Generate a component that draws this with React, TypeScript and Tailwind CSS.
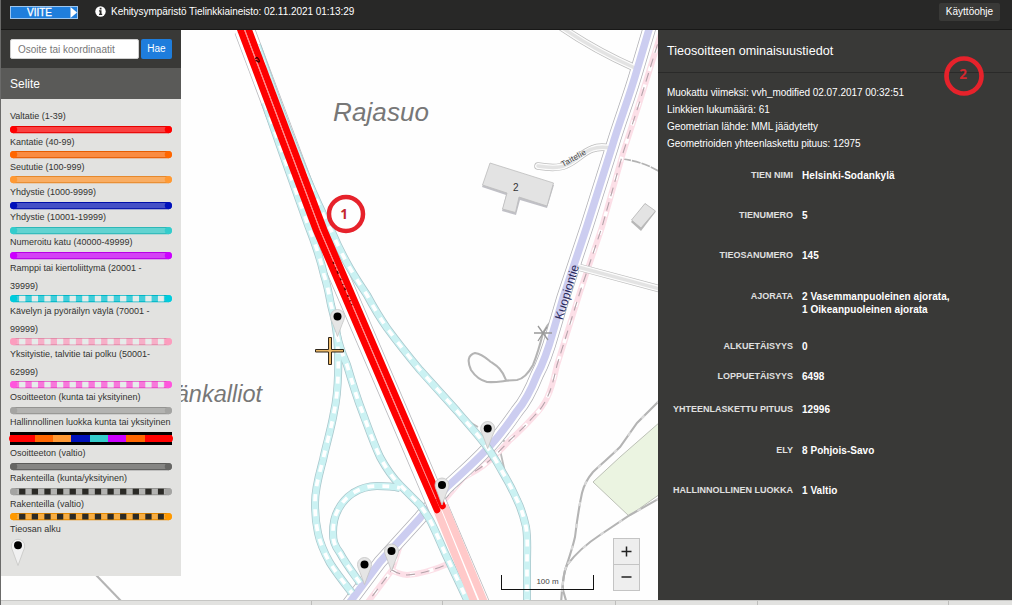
import React from "react";

const ramps = [
  "M257 45 C280 110 305 180 332 232 C345 262 355 277 367 295 C374 308 380 318 387 328 C398 343 410 358 420 370 L457 411 C468 424 480 437 487 447 C495 458 499 466 503 473 C509 483 513 491 517 500 C522 510 524 518 526 527 C528 540 527 550 527 562 L527 604",
  "M265 103 L281 149 L308 225 C315 243 320 257 324 275 C328 287 329 295 331 305 C334 315 336 325 337 335 C339 355 339 390 334 412 C331 430 326 445 323 460 C319 475 315 488 315 503 C315 515 316 524 318 533 C320 543 325 554 330 563 C337 574 345 584 352 593",
  "M337 335 C340 350 344 357 347 365 C352 382 357 398 362 411 C368 427 373 442 380 457 C386 468 392 477 400 485 C408 493 413 498 420 505 C424 511 428 516 431 522 C436 532 440 542 445 553 L470 606",
  "M360 583 C353 573 346 564 340 553 C334 545 333 540 333 533 C333 525 334 517 338 510 C342 502 347 497 353 493 C361 488 369 486 377 486 C385 486 391 486 400 488",
];
const highway = "M653 16 L637 70 C629 98 620 120 612 147 L587 226 L563 298 L553 332 C548 350 544 362 537 375 C531 390 525 402 517 411 C508 424 498 438 487 449 C474 463 460 475 447 487 C437 499 428 508 420 518 L380 562 L347 606";
const footpaths = [
  "M662 30 L638 107 L623 153 L602 227 L580 292 L557 365 C554 379 551 390 547 398 C543 406 540 410 535 415 C526 425 518 433 510 440 C498 453 488 463 477 470 L463 478 L440 505 L418 523 L400 545 L392 570 L368 602",
  "M392 570 Q398 574 407 575 Q425 574 450 563",
];
const lanes = [
  "M554 22 Q590 48 635 68",
  "M538 166 C550 168 560 168 566 165 C576 161 583 152 592 149 C599 146 605 147 611 148",
  "M578 267 C600 273 630 281 660 289",
];
const tracks = [
  "M554 318 Q547 325 543 333 C540 345 537 355 533 365 C528 374 523 379 517 380 C505 380 498 383 487 382 C479 380 475 376 471 370 C467 361 468 355 475 353 C482 354 486 358 491 362 C497 366 502 369 506 380",
  "M660 400 L637 423 L620 447 C610 457 601 464 593 472 C587 479 584 485 582 493 C579 507 577 520 575 537 C572 550 568 561 565 570 Q562 585 561 604",
  "M660 498 L630 515 L600 535 Q580 548 567 565 Q562 578 563 590 L567 604",
  "M96 575 L121 601",
];
const motorway = "M244.500 30 L319.500 230 L399 415 L482 610";

function Pin({ x, y }: { x: number; y: number }) {
  return (
    <g transform={`translate(${x} ${y})`}>
      <path d="M-7 0 A7 7 0 0 1 7 0 C7 3 5.500 5 4.500 8 L0 20 L-4.500 8 C-5.500 5 -7 3 -7 0Z" fill="#e5e5e5" stroke="#c4c4c4" strokeWidth=".8" />
      <circle r="4" fill="#000" />
    </g>
  );
}

function RoadMap() {
  return (
    <svg className="block h-[570px] w-[658px] bg-[#fefefe]" viewBox="0 30 658 570" fill="none">
      <path d="M660 422 L620 457 L593 482 L629 516 L660 494Z" fill="#ebf4e1" stroke="#bcc0b6" />
      {tracks.map((d) => <path key={d} d={d} stroke="#b4b4b4" strokeWidth="2.100" />)}
      {tracks.slice(1, 3).map((d) => <path key={d} d={d} stroke="#d9d9d9" strokeWidth="2.100" strokeDasharray="4 18" />)}
      <path d="M458 410 Q468 422 478 427 M495 432 L507 444 M500 450 L505 472 L516 495" stroke="#bbb" strokeWidth="1.800" />
      <path d="M622 159 Q642 161 660 172" stroke="#b3b3b3" strokeWidth="1.700" strokeDasharray="9 1" />
      {footpaths.map((d) => (
        <g key={d}>
          <path d={d} stroke="#fcdfe7" strokeWidth="6" />
          <path d={d} stroke="#fff" strokeWidth="3.500" strokeDasharray="5 14" />
          <path d={d} stroke="#b5a3aa" strokeWidth="1.100" strokeDasharray="9 6" />
        </g>
      ))}
      {lanes.map((d) => <path key={d} d={d} stroke="#bdbdbd" strokeWidth="7.500" strokeLinecap="round" />)}
      <path d={highway} stroke="#b0b0b5" strokeWidth="13.500" />
      <path d={highway} stroke="#fff" strokeWidth="12" />
      {lanes.map((d) => (
        <g key={d} strokeLinecap="round">
          <path d={d} stroke="#fcfcfc" strokeWidth="6" />
          <path d={d} stroke="#e3e3e3" strokeWidth="3.500" />
        </g>
      ))}
      <path d={highway} stroke="#cccdf0" strokeWidth="7.500" />
      <path d={motorway} stroke="#b9b9bd" strokeWidth="21" />
      <path d={motorway} stroke="#fff" strokeWidth="19.500" />
      {ramps.map((d) => <path key={d} d={d} stroke="#a9c6cb" strokeWidth="8" />)}
      {ramps.map((d) => <path key={d} d={d} stroke="#cbf2f3" strokeWidth="6.500" />)}
      {ramps.map((d) => <path key={d} d={d} stroke="#fff" strokeWidth="3.700" strokeDasharray="7 8" />)}
      <path d="M437 510 L475 604 M444 505 L485 604" stroke="#ffc9c9" strokeWidth="7.500" />
      <path d="M244.500 30 L320 230 L399.500 415 L440 508" stroke="#ffb0b0" strokeWidth="3" />
      <path d="M237.500 22 L316 230 L395.500 415 L437 510" stroke="#fd0000" strokeWidth="6.600" strokeLinecap="round" />
      <path d="M245.800 22 L324.200 230 L403.800 415 L442.500 506" stroke="#fd0000" strokeWidth="6.600" strokeLinecap="round" />
      <path d="M240.900 20 L320.100 230 L399.600 415 L436 499" stroke="#ff8585" strokeWidth="1" />
      <path d="M255.500 59 q1 -3 3 0 q2 3 0 3 l-3 -2" stroke="#440000" strokeWidth="1.300" />
      <path d="M333 262 L352 305" stroke="#6d0000" strokeWidth="1.500" strokeDasharray="2 4 1 3 3 5" />

      <path d="M490 165 L554 185 L547 208 L520 200 L516 215 L502 211 L506 195 L482 187Z" fill="#c0c0c6" />
      <path d="M490 163 L553.500 183 L547 206 L519 197 L515.500 212.500 L502.500 209 L507 193 L482.500 185Z" fill="#e3e3e3" stroke="#bdbdbd" strokeWidth=".8" />
      <path d="M631 222 L645 203.500 L655.500 212 L641 231Z" fill="#b8b8b8" />
      <path d="M631.500 220 L645 203.500 L655.500 211 L641 228Z" fill="#e3e3e3" stroke="#b5b5b5" strokeWidth=".8" />
      <path d="M534 333 H552 M538 326 L548 340 M547 327 L538 341" stroke="#999" strokeWidth="1.300" />

      <g className="font-['Liberation_Sans',sans-serif]">
        <text x="333" y="120.500" fontSize="26" fontStyle="italic" fill="#777" textLength="96">Rajasuo</text>
        <text x="262" y="402" fontSize="23.500" fontStyle="italic" fill="#777" textAnchor="end">änkalliot</text>
        <text transform="translate(562.500 320.500) rotate(-73)" fontSize="12" fill="#28285a" textLength="57">Kuopiontie</text>
        <text transform="translate(563 167) rotate(-29)" fontSize="8" fill="#444" textLength="27">Taitelie</text>
        <text x="513" y="191" fontSize="10" fill="#333">2</text>
      </g>

      <Pin x={337.5} y={316.5} />
      <Pin x={487.7} y={428.5} />
      <Pin x={442} y={485} />
      <Pin x={391.5} y={551} />
      <Pin x={364.5} y={564.5} />
      <path d="M328.500 337.500 h3 v12 h12 v2.500 h-12 v12.500 h-3 v-12.500 h-13 v-2.500 h13Z" fill="#edb967" stroke="#30271b" />
      <circle cx="346" cy="214" r="17" stroke="#e6222b" strokeWidth="4.500" />
      <text x="344" y="219" fontSize="13.500" fontWeight="700" fill="#c3262d" textAnchor="middle" className="font-['Open_Sans',sans-serif]">1</text>
    </svg>
  );
}

type Item = { label: string; color: string; inner?: string; kind?: "dash" | "black" | "multi" };

const legend: Item[] = [
  { label: "Valtatie (1-39)", color: "#ff0000", inner: "#fa4141" },
  { label: "Kantatie (40-99)", color: "#ff6600", inner: "#fa8b41" },
  { label: "Seututie (100-999)", color: "#ff9933", inner: "#f9ad63" },
  { label: "Yhdystie (1000-9999)", color: "#0011bb", inner: "#4450c6" },
  { label: "Yhdystie (10001-19999)", color: "#33cccc", inner: "#62d3d1" },
  { label: "Numeroitu katu (40000-49999)", color: "#cc00ff", inner: "#d442f5" },
  { label: "Ramppi tai kiertoliittymä (20001 - 39999)", color: "#00ccdd", inner: "#43cedb", kind: "dash" },
  { label: "Kävelyn ja pyöräilyn väylä (70001 - 99999)", color: "#fc9dbe", inner: "#f7afc8", kind: "dash" },
  { label: "Yksityistie, talvitie tai polku (50001-62999)", color: "#ff55dd", inner: "#f878db", kind: "dash" },
  { label: "Osoitteeton (kunta tai yksityinen)", color: "#a4a4a2", inner: "#b3b3b1" },
  { label: "Hallinnollinen luokka kunta tai yksityinen", color: "#ff0000", kind: "multi" },
  { label: "Osoitteeton (valtio)", color: "#666664", inner: "#858583" },
  { label: "Rakenteilla (kunta/yksityinen)", color: "#a4a4a2", inner: "#b3b3b1", kind: "black" },
  { label: "Rakenteilla (valtio)", color: "#ff9900", inner: "#f6ad43", kind: "black" },
];

const segments = [
  [0, 25, "#ff0000"], [25, 18, "#ff6600"], [43, 18, "#ff9933"], [61, 19, "#0011bb"], [80, 18, "#33cccc"],
  [98, 18, "#cc00ff"], [116, 19, "#ff6600"], [135, 27, "#ff0000"],
] as const;

function Bar({ item }: { item: Item }) {
  if (item.kind === "multi") {
    return (
      <svg className="-mb-[0.6px] mt-[0.6px] block h-[13px] w-[162px] overflow-visible" viewBox="0 0 162 13">
        <rect width="162" height="13" fill="#000" />
        {segments.map(([x, w, c]) => <rect key={x} x={x} y="3" width={w} height="7" fill={c} />)}
        <circle cx="2.500" cy="6.500" r="3.500" fill="#ff0000" />
        <circle cx="159.500" cy="6.500" r="3.500" fill="#ff0000" />
      </svg>
    );
  }
  return (
    <svg className="-mb-[0.6px] mt-[0.6px] block h-[7.2px] w-[162px] overflow-visible" viewBox="0 0 162 7.2">
      <rect width="162" height="7.200" rx="3.500" fill={item.color} />
      <rect width="155" x="3.500" height="7.200" fill="#000" opacity=".1" />
      <rect x="5" y="1" width="152" height="5.200" fill={item.inner} />
      {item.kind && (
        <path
          d="M9 3.600 H154"
          stroke={item.kind === "dash" ? "#e6ecea" : "#2b2a26"}
          strokeWidth="5.600"
          strokeDasharray="6.300 6.340"
        />
      )}
      <circle cx="3.500" cy="3.600" r="3.600" fill={item.color} />
      <circle cx="158.500" cy="3.600" r="3.600" fill={item.color} />
    </svg>
  );
}

function Sidebar() {
  return (
    <aside className="absolute left-0 top-0 flex h-[546px] w-[181px] flex-col bg-[#e2e2e0]">
      <div className="flex h-[38px] items-start gap-[2px] bg-[#393937] pl-[10px] pt-[9px]">
        <div className="flex h-[20px] w-[129px] items-center rounded-[2px] border border-[#cfcfcf] bg-white pl-[7px] text-[10px] text-[#777]">Osoite tai koordinaatit</div>
        <button className="h-[20px] w-[31px] rounded-[2px] bg-[#1e7ddc] text-[10px] leading-[20px] text-white">Hae</button>
      </div>
      <div className="h-[31px] bg-[#5a5a58] pl-[10px] text-[12px] leading-[32px] text-white">Selite</div>
      <div className="flex flex-col pl-[10px] pt-[8.4px] text-[9px] leading-[18px] text-[#333331]">
        {legend.map((item) => (
          <div key={item.label}>
            <div className="w-[162px]">{item.label}</div>
            <Bar item={item} />
          </div>
        ))}
        <div>Tieosan alku</div>
        <svg className="block h-[28px] w-[16px]" viewBox="-8 -8 16 28">
          <path d="M-6.700 0 A6.700 6.700 0 0 1 6.700 0 C6.700 3 5 5 4.200 8 L0 19.500 L-4.200 8 C-5 5 -6.700 3 -6.700 0Z" fill="#f1f1f1" stroke="#c6c6c4" strokeWidth=".8" />
          <circle cy="-.8" r="4" fill="#000" />
        </svg>
      </div>
    </aside>
  );
}

const rows: [string, string, string][] = [
  ["TIEN NIMI", "Helsinki-Sodankylä", "h-[40px]"],
  ["TIENUMERO", "5", "h-[40px]"],
  ["TIEOSANUMERO", "145", "h-[41px]"],
  ["AJORATA", "2 Vasemmanpuoleinen ajorata,\n1 Oikeanpuoleinen ajorata", "h-[50px]"],
  ["ALKUETÄISYYS", "0", "h-[30px]"],
  ["LOPPUETÄISYYS", "6498", "h-[33px]"],
  ["YHTEENLASKETTU PITUUS", "12996", "h-[41px]"],
  ["ELY", "8 Pohjois-Savo", "h-[40px]"],
  ["HALLINNOLLINEN LUOKKA", "1 Valtio", "h-[40px]"],
];

function Details() {
  return (
    <section className="relative h-[570px] w-[354px] bg-[#393937] text-white">
      <h2 className="h-[43px] border-b border-[#2a2a29] pl-[9px] text-[12.6px] leading-[42px]">Tieosoitteen ominaisuustiedot</h2>
      <div className="pl-[9px] pt-[11px] text-[10px] leading-[17px]">
        <p className="tracking-[-0.03px]">Muokattu viimeksi: vvh_modified 02.07.2017 00:32:51</p>
        <p>Linkkien lukumäärä: 61</p>
        <p className="tracking-[-0.05px]">Geometrian lähde: MML jäädytetty</p>
        <p className="tracking-[-0.05px]">Geometrioiden yhteenlaskettu pituus: 12975</p>
      </div>
      <dl className="pl-[9px] pt-[17px] font-bold leading-[13px]">
        {rows.map(([name, value, height]) => (
          <div key={name} className={`flex gap-[9px] ${height}`}>
            <dt className="w-[126px] shrink-0 text-right text-[9px] text-[#e0e0e0]">{name}</dt>
            <dd className="whitespace-pre text-[10px] tracking-[0.05px]">{value}</dd>
          </div>
        ))}
      </dl>
      <svg className="absolute left-[286px] top-[26px] h-[40px] w-[40px]" viewBox="0 0 40 40">
        <circle cx="20" cy="20" r="17.500" fill="none" stroke="#e6222b" strokeWidth="4.700" />
        <text x="19" y="23" fontSize="13.500" fontWeight="700" fill="#d3272e" textAnchor="middle" className="font-['Open_Sans',sans-serif]">2</text>
      </svg>
    </section>
  );
}

export default function App() {
  return (
    <div className="relative h-[605px] w-[1012px] overflow-hidden bg-[#282827] font-['Liberation_Sans',Arial,sans-serif]">
      <header className="flex h-[30px] items-start border-b border-[#181817] bg-[#282827] pl-[10px] pr-[12px] text-[10px] text-white">
        <svg className="mt-[6px] h-[13px] w-[68px] shrink-0" viewBox="0 0 68 13">
          <rect x=".5" y=".5" width="67" height="12" fill="#1f7edc" stroke="#9cc6f0" />
          <path d="M60.500 1 L67 6.500 L60.500 12Z" fill="#fff" />
          <text x="17" y="10.300" fontSize="10.500" fill="#fff" textLength="25" lengthAdjust="spacingAndGlyphs" stroke="#fff" strokeWidth=".3">VIITE</text>
        </svg>
        <svg className="ml-[17px] mt-[6px] h-[11px] w-[11px] shrink-0" viewBox="0 0 11 11">
          <circle cx="5.500" cy="5.500" r="5.200" fill="#fff" />
          <path d="M4.700 1.800 h1.800 v1.600 h-1.800Z M4 4.300 h2.500 v3.400 h.7 v1.200 H4 v-1.200 h.7 V5.500 H4Z" fill="#282827" />
        </svg>
        <span className="ml-[5px] tracking-[-0.04px] leading-[24px]">Kehitysympäristö Tielinkkiaineisto: 02.11.2021 01:13:29</span>
        <button className="ml-auto mt-[3px] h-[18px] w-[61px] rounded-[2px] bg-[#393937] text-[10px] leading-[18px]">Käyttöohje</button>
      </header>
      <main className="flex h-[570px]">
        <div className="relative w-[658px] shrink-0">
          <RoadMap />
          <Sidebar />
          <div className="absolute left-[613px] top-[508px] flex h-[53px] w-[27px] flex-col border border-[#c4c4c4] bg-[#eee]">
            <button className="flex flex-1 items-center justify-center border-b border-[#c4c4c4]" aria-label="Lähennä">
              <svg className="h-[11px] w-[11px]" viewBox="0 0 11 11"><path d="M5.500 .500 V10.500 M.5 5.500 H10.500" stroke="#222" strokeWidth="1.500" /></svg>
            </button>
            <button className="flex flex-1 items-center justify-center" aria-label="Loitonna">
              <svg className="h-[11px] w-[11px]" viewBox="0 0 11 11"><path d="M.5 5 H10.500" stroke="#222" strokeWidth="1.500" /></svg>
            </button>
          </div>
          <div className="absolute left-[501px] top-[545px] h-[15px] w-[93px] border border-t-0 border-[#111] text-center text-[8px] leading-[13px] text-[#444]">100 m</div>
        </div>
        <Details />
      </main>
      <footer className="flex h-[5px] border-t border-[#c6c6c4] bg-[#e2e2e0]">
        <div className="w-[312px] border-r border-[#bdbdbb]" />
        <div className="w-[131px] border-r border-[#bdbdbb]" />
        <div className="w-[173px] border-r border-[#bdbdbb]" />
        <div className="w-[142px] border-r border-[#bdbdbb]" />
        <div className="w-[191px] border-r border-[#bdbdbb]" />
      </footer>
      <div className="absolute left-0 top-0 h-full w-px bg-[#6a6a69]" />
    </div>
  );
}
